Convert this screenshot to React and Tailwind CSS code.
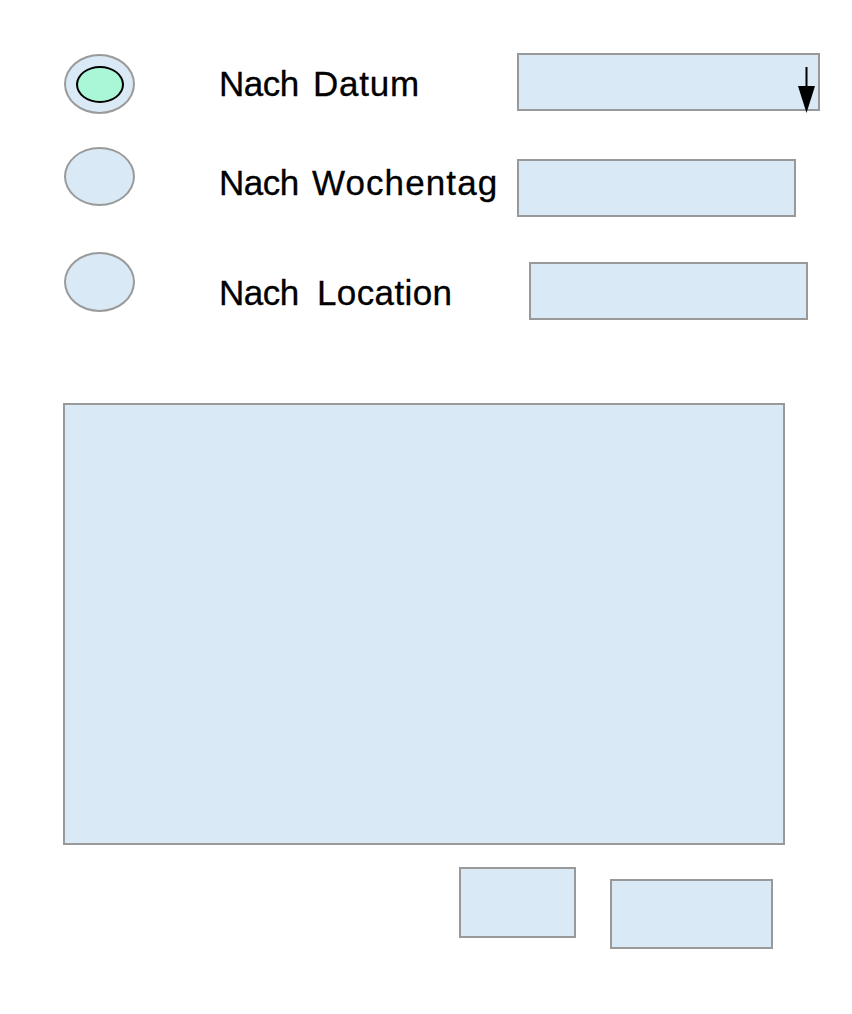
import React from "react";

function Radio({ selected, className = "" }) {
  return (
    <div
      className={
        "flex shrink-0 items-center justify-center rounded-[50%] border-2 border-[#9a9a9a] bg-[#d9eaf6] " +
        className
      }
    >
      {selected && (
        <div className="h-[37px] w-[48px] rounded-[50%] border-2 border-black bg-[#aaf7d8]" />
      )}
    </div>
  );
}

export default function App() {
  return (
    <div
      className="flex h-[1014px] w-[852px] flex-col bg-white pt-[53px] text-black"
      style={{ fontFamily: '"Liberation Sans", Arial, sans-serif' }}
    >
      {/* Row 1 */}
      <div className="flex items-start">
        <Radio selected className="ml-[64px] mt-[1px] h-[60px] w-[71px]" />
        <div className="ml-[84px] mt-[13px] w-[298px] shrink-0 text-[35px] leading-[35px] tracking-[-0.5px] [word-spacing:5px] [-webkit-text-stroke:0.3px_black]">
          Nach <span className="tracking-[0.8px]">Datum</span>
        </div>
        <div className="relative h-[58px] w-[303px] shrink-0 border-2 border-[#999999] bg-[#d9eaf6]">
          <svg
            className="absolute left-[279px] top-[12px]"
            width="17"
            height="46"
            viewBox="0 0 17 46"
          >
            <line x1="8.5" y1="0" x2="8.5" y2="21" stroke="black" strokeWidth="2" />
            <polygon points="0,19 17,19 8.5,46" fill="black" />
          </svg>
        </div>
      </div>

      {/* Row 2 */}
      <div className="mt-[33px] flex items-start">
        <Radio className="ml-[64px] h-[59px] w-[71px]" />
        <div className="ml-[84px] mt-[18px] w-[298px] shrink-0 text-[35px] leading-[35px] tracking-[-0.5px] [word-spacing:4px] [-webkit-text-stroke:0.3px_black]">
          Nach <span className="tracking-[1.1px]">Wochentag</span>
        </div>
        <div className="mt-[12px] h-[58px] w-[279px] shrink-0 border-2 border-[#999999] bg-[#d9eaf6]" />
      </div>

      {/* Row 3 */}
      <div className="mt-[35px] flex items-start">
        <Radio className="ml-[64px] h-[60px] w-[71px]" />
        <div className="ml-[84px] mt-[23px] w-[298px] shrink-0 text-[35px] leading-[35px] tracking-[-0.5px] [word-spacing:9px] [-webkit-text-stroke:0.3px_black]">
          Nach <span className="tracking-[0.4px]">Location</span>
        </div>
        <div className="ml-[12px] mt-[10px] h-[58px] w-[279px] shrink-0 border-2 border-[#999999] bg-[#d9eaf6]" />
      </div>

      {/* Big area */}
      <div className="ml-[63px] mt-[83px] h-[442px] w-[722px] border-2 border-[#999999] bg-[#d9eaf6]" />

      {/* Buttons */}
      <div className="mt-[22px] flex items-start">
        <div className="ml-[459px] h-[71px] w-[117px] shrink-0 border-2 border-[#999999] bg-[#d9eaf6]" />
        <div className="ml-[34px] mt-[12px] h-[70px] w-[163px] shrink-0 border-2 border-[#999999] bg-[#d9eaf6]" />
      </div>
    </div>
  );
}
